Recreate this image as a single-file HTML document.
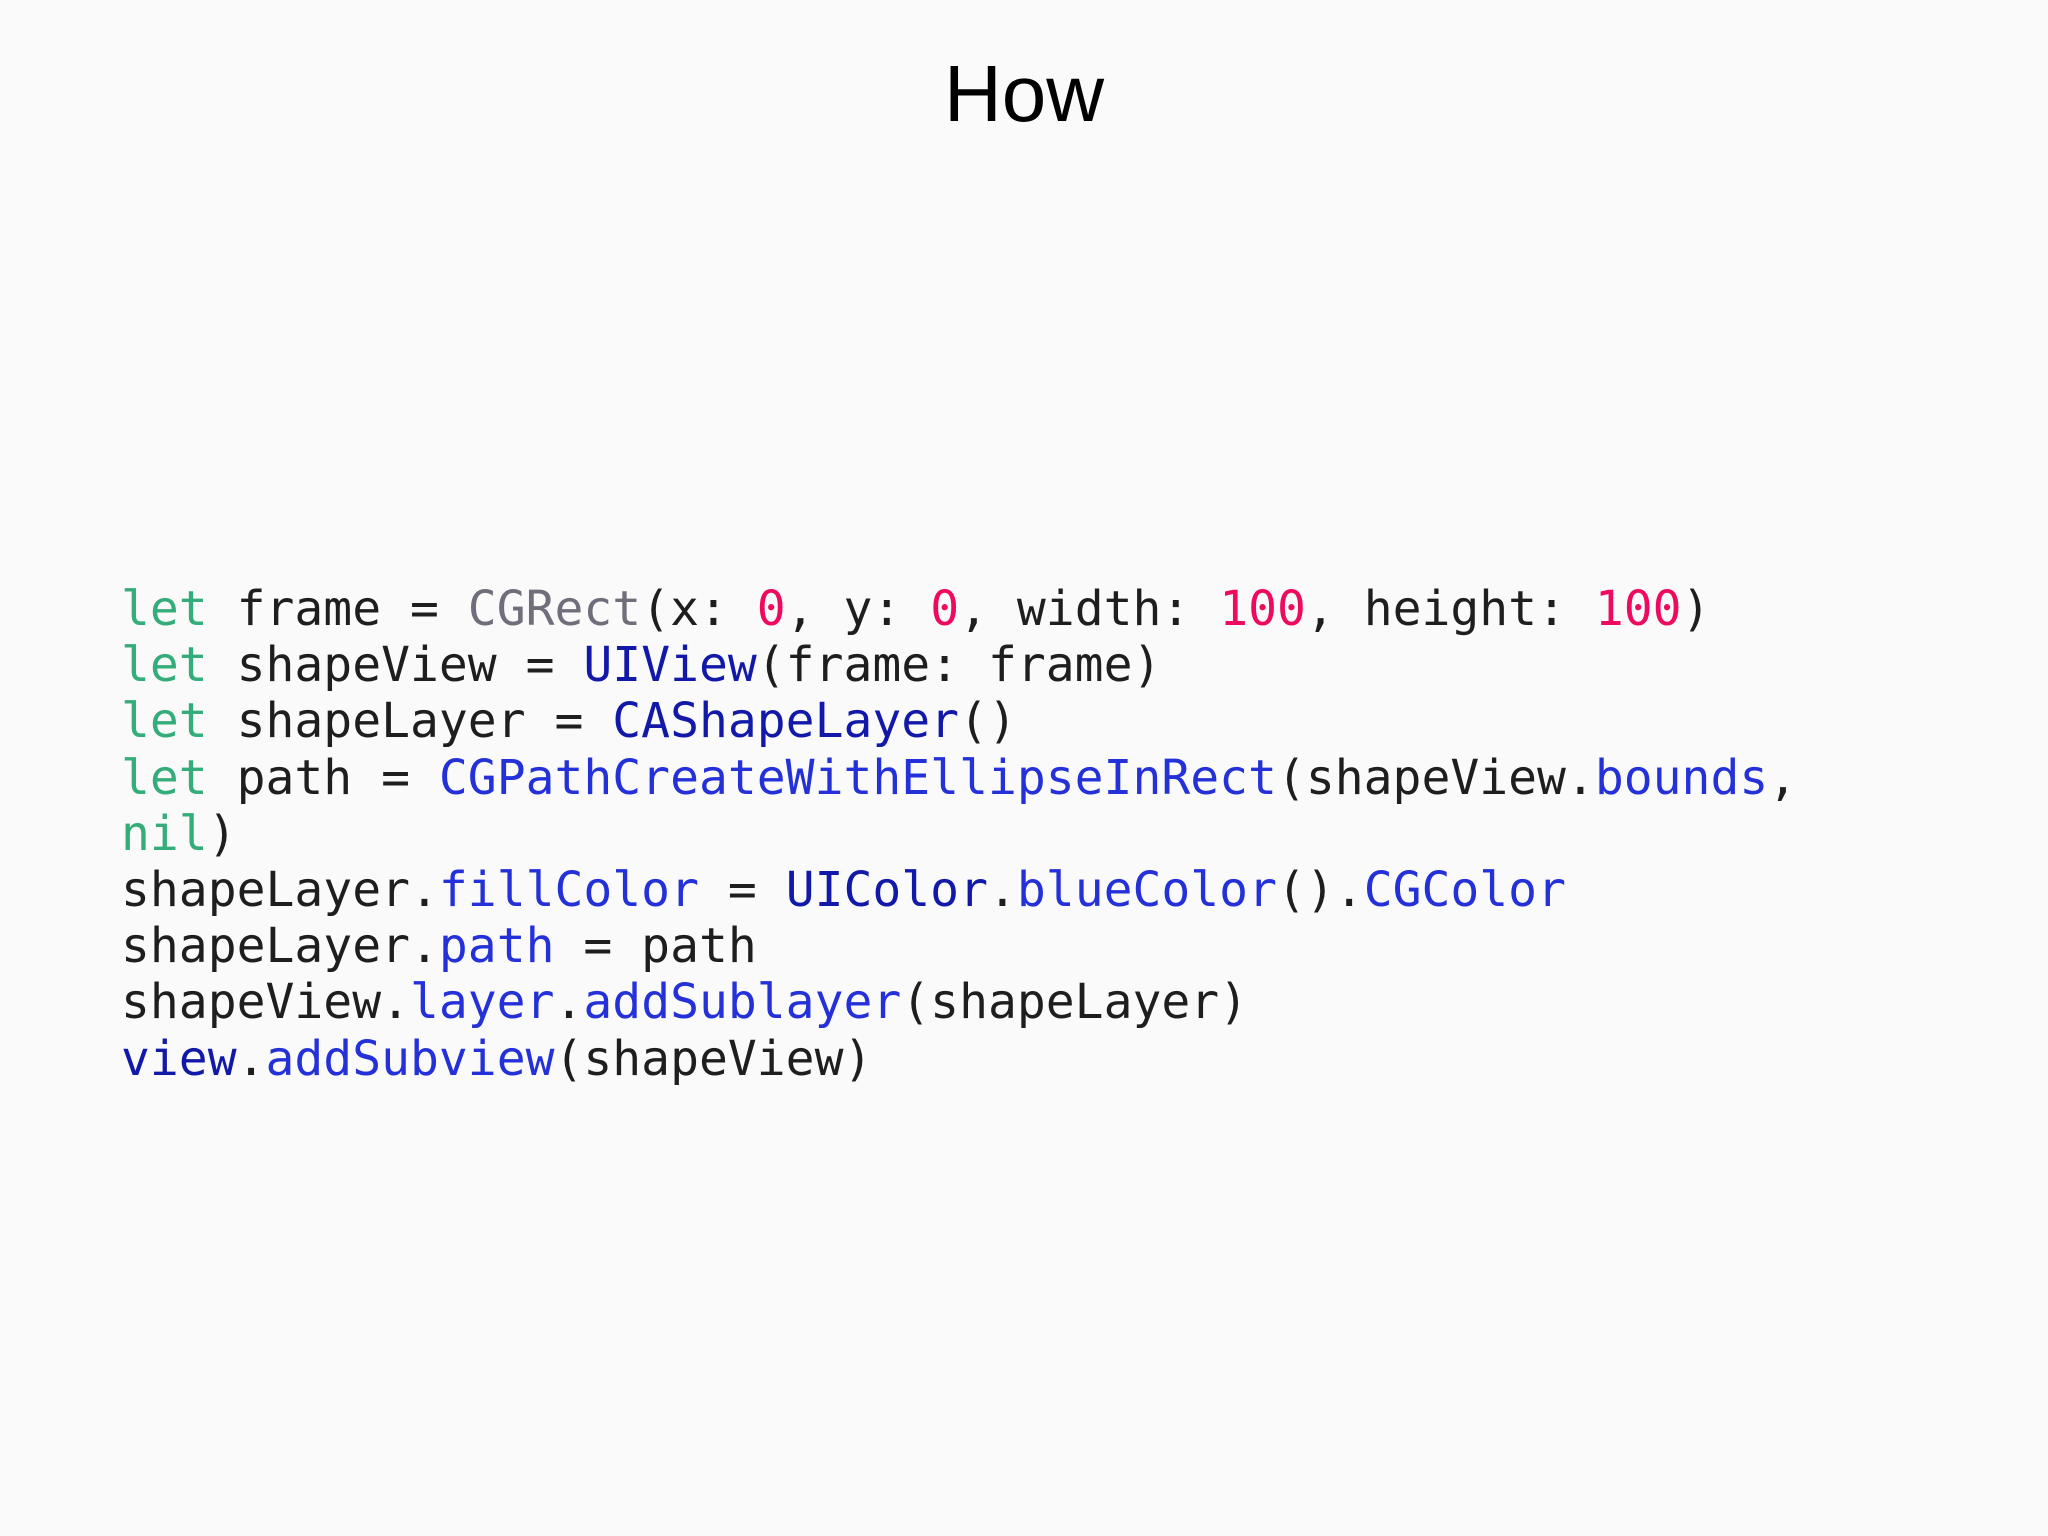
<!DOCTYPE html>
<html><head><meta charset="utf-8"><style>
html,body{margin:0;padding:0;background:#fafafa;width:2048px;height:1536px;overflow:hidden}
.t{position:absolute;left:0;width:2048px;top:54px;text-align:center;font:80px/80px "Liberation Sans",sans-serif;color:#000}
pre{position:absolute;left:121px;top:581px;margin:0;font:48px/56.2px "DejaVu Sans Mono","Liberation Mono",monospace;color:#1e1e1e}
.k{color:#35ad7a}.g{color:#6f6e7a}.n{color:#ee0a5e}.d{color:#1219a8}.b{color:#2430d8}
</style></head><body>
<div class="t">How</div>
<pre><span class="k">let</span> frame = <span class="g">CGRect</span>(x: <span class="n">0</span>, y: <span class="n">0</span>, width: <span class="n">100</span>, height: <span class="n">100</span>)
<span class="k">let</span> shapeView = <span class="d">UIView</span>(frame: frame)
<span class="k">let</span> shapeLayer = <span class="d">CAShapeLayer</span>()
<span class="k">let</span> path = <span class="b">CGPathCreateWithEllipseInRect</span>(shapeView.<span class="b">bounds</span>,
<span class="k">nil</span>)
shapeLayer.<span class="b">fillColor</span> = <span class="d">UIColor</span>.<span class="b">blueColor</span>().<span class="b">CGColor</span>
shapeLayer.<span class="b">path</span> = path
shapeView.<span class="b">layer</span>.<span class="b">addSublayer</span>(shapeLayer)
<span class="d">view</span>.<span class="b">addSubview</span>(shapeView)</pre>
</body></html>
